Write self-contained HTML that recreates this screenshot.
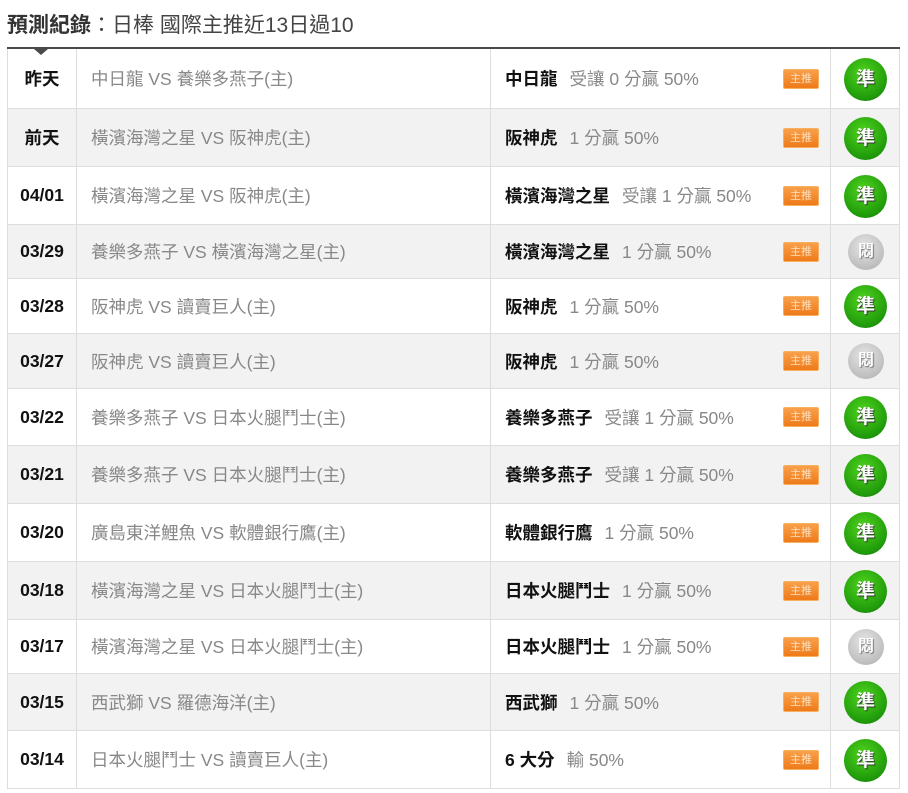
<!DOCTYPE html>
<html><head><meta charset="utf-8"><style>
body{margin:0;background:#fff;width:908px;height:793px;overflow:hidden;font-family:"Liberation Sans","Noto Sans CJK TC",sans-serif;}
h1{position:absolute;left:7px;top:9px;margin:0;font-size:21px;font-weight:normal;color:#444;}
h1 b{color:#333}
.tbl{position:absolute;left:7px;top:47px;width:893px;border-top:2px solid #4a4a4a;}
.tri{position:absolute;left:34px;top:49px;width:0;height:0;border-left:7px solid transparent;border-right:7px solid transparent;border-top:6px solid #4a4a4a;}
.r{position:relative;border-bottom:1px solid #ddd;border-left:1px solid #ddd;border-right:1px solid #ddd;box-sizing:border-box;font-size:17.5px;}
.r:nth-child(even){background:#f2f2f2}
.r div{position:absolute;top:0;bottom:0;display:flex;align-items:center;}
.d{left:0;width:68px;justify-content:center;color:#111;border-right:1px solid #ddd;font-weight:bold}
.m{left:68px;width:415px;padding-left:15px;box-sizing:border-box;color:#888;border-right:1px solid #ddd}
.p{left:484px;width:339px;padding-left:13px;box-sizing:border-box;color:#888;border-right:1px solid #ddd}
.p b{color:#111;margin-right:12px}
.bd{position:absolute;left:775px;width:34px;height:18px;top:50%;margin-top:-10px;background:linear-gradient(#f9a04a,#ee7a1a);border:1px solid #f7b060;border-radius:2px;color:#fde0c0;font-size:11px;text-align:center;line-height:18px;}
.ic{position:absolute;left:836px;top:50%;width:43px;height:43px;margin-top:-21px;border-radius:50%;background:radial-gradient(circle at 45% 35%,#4fd41e,#1f9a0a 70%,#127005);color:#fff;font-weight:bold;font-size:19px;text-align:center;line-height:43px;text-shadow:1px 1px 1px #333}
.ic.g{left:840px;width:36px;height:36px;margin-top:-18px;line-height:36px;background:radial-gradient(circle at 45% 35%,#e6e6e6,#bbb 75%,#999);font-size:16px;text-shadow:1px 1px 1px #777}
</style></head><body>
<h1><b>預測紀錄</b>：日棒 國際主推近13日過10</h1>
<div class="tbl">
<div class="r" style="height:60px"><div class="d">昨天</div><div class="m">中日龍 VS 養樂多燕子(主)</div><div class="p"><b>中日龍</b>受讓 0 分贏 50%</div><span class="bd">主推</span><span class="ic">準</span></div>
<div class="r" style="height:58px"><div class="d">前天</div><div class="m">橫濱海灣之星 VS 阪神虎(主)</div><div class="p"><b>阪神虎</b>1 分贏 50%</div><span class="bd">主推</span><span class="ic">準</span></div>
<div class="r" style="height:58px"><div class="d">04/01</div><div class="m">橫濱海灣之星 VS 阪神虎(主)</div><div class="p"><b>橫濱海灣之星</b>受讓 1 分贏 50%</div><span class="bd">主推</span><span class="ic">準</span></div>
<div class="r" style="height:54px"><div class="d">03/29</div><div class="m">養樂多燕子 VS 橫濱海灣之星(主)</div><div class="p"><b>橫濱海灣之星</b>1 分贏 50%</div><span class="bd">主推</span><span class="ic g">悶</span></div>
<div class="r" style="height:55px"><div class="d">03/28</div><div class="m">阪神虎 VS 讀賣巨人(主)</div><div class="p"><b>阪神虎</b>1 分贏 50%</div><span class="bd">主推</span><span class="ic">準</span></div>
<div class="r" style="height:55px"><div class="d">03/27</div><div class="m">阪神虎 VS 讀賣巨人(主)</div><div class="p"><b>阪神虎</b>1 分贏 50%</div><span class="bd">主推</span><span class="ic g">悶</span></div>
<div class="r" style="height:57px"><div class="d">03/22</div><div class="m">養樂多燕子 VS 日本火腿鬥士(主)</div><div class="p"><b>養樂多燕子</b>受讓 1 分贏 50%</div><span class="bd">主推</span><span class="ic">準</span></div>
<div class="r" style="height:58px"><div class="d">03/21</div><div class="m">養樂多燕子 VS 日本火腿鬥士(主)</div><div class="p"><b>養樂多燕子</b>受讓 1 分贏 50%</div><span class="bd">主推</span><span class="ic">準</span></div>
<div class="r" style="height:58px"><div class="d">03/20</div><div class="m">廣島東洋鯉魚 VS 軟體銀行鷹(主)</div><div class="p"><b>軟體銀行鷹</b>1 分贏 50%</div><span class="bd">主推</span><span class="ic">準</span></div>
<div class="r" style="height:58px"><div class="d">03/18</div><div class="m">橫濱海灣之星 VS 日本火腿鬥士(主)</div><div class="p"><b>日本火腿鬥士</b>1 分贏 50%</div><span class="bd">主推</span><span class="ic">準</span></div>
<div class="r" style="height:54px"><div class="d">03/17</div><div class="m">橫濱海灣之星 VS 日本火腿鬥士(主)</div><div class="p"><b>日本火腿鬥士</b>1 分贏 50%</div><span class="bd">主推</span><span class="ic g">悶</span></div>
<div class="r" style="height:57px"><div class="d">03/15</div><div class="m">西武獅 VS 羅德海洋(主)</div><div class="p"><b>西武獅</b>1 分贏 50%</div><span class="bd">主推</span><span class="ic">準</span></div>
<div class="r" style="height:58px"><div class="d">03/14</div><div class="m">日本火腿鬥士 VS 讀賣巨人(主)</div><div class="p"><b>6 大分</b>輸 50%</div><span class="bd">主推</span><span class="ic">準</span></div>
</div>
<div class="tri"></div>
</body></html>
